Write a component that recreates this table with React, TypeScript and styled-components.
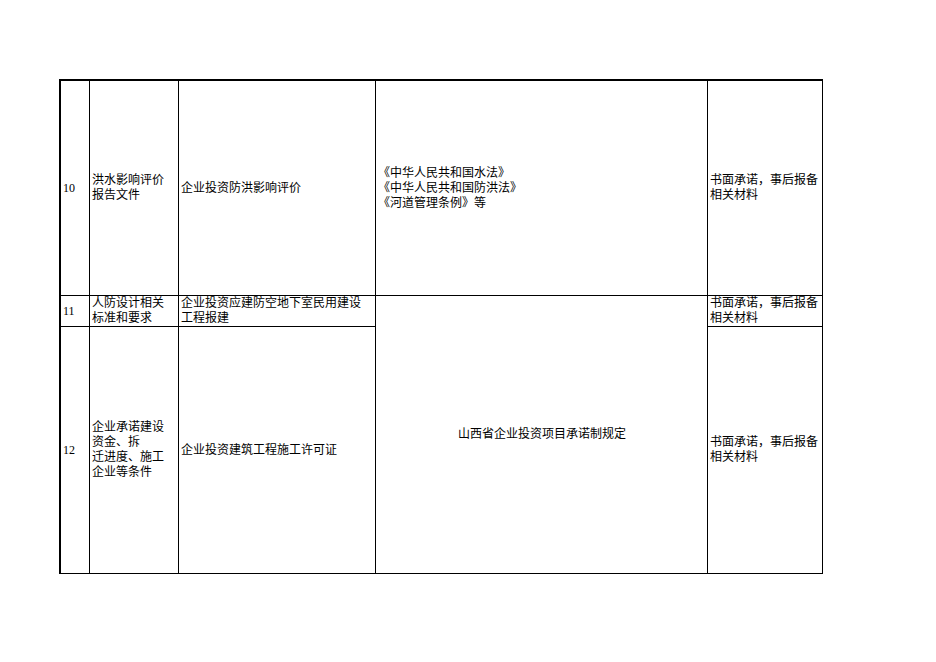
import React from 'react'
import styled, { createGlobalStyle } from 'styled-components'

const GlobalStyle = createGlobalStyle`
  html, body {
    margin: 0;
    padding: 0;
    background: #ffffff;
  }
  body {
    font-family: "Liberation Serif", "Noto Sans CJK SC", serif;
    color: #000000;
  }
`

const Page = styled.div`
  width: 936px;
  height: 662px;
  padding: 79px 0 0 59px;
  box-sizing: border-box;
`

const Sheet = styled.div`
  display: grid;
  grid-template-columns: 29px 89px 197px 332px 115px;
  grid-template-rows: 215px 31px 247px;
  width: max-content;
  border-top: 2px solid #000;
  border-left: 2px solid #000;
`

const Cell = styled.div<{ $center?: boolean; $span?: number }>`
  box-sizing: border-box;
  border-right: 1px solid #000;
  border-bottom: 1px solid #000;
  padding: 0 1px 0 2px;
  display: flex;
  align-items: center;
  justify-content: ${p => (p.$center ? 'center' : 'flex-start')};
  text-align: ${p => (p.$center ? 'center' : 'left')};
  grid-row: ${p => (p.$span ? `span ${p.$span}` : 'auto')};
  font-size: 12px;
  line-height: 15px;
  white-space: nowrap;
  overflow: hidden;
`

const Lines = ({ items }: { items: string[] }) => (
  <div>
    {items.map((t, i) => (
      <div key={i}>{t}</div>
    ))}
  </div>
)

const promise = ['书面承诺，事后报备', '相关材料']

export default function App() {
  return (
    <>
      <GlobalStyle />
      <Page>
        <Sheet>
          <Cell>10</Cell>
          <Cell>
            <Lines items={['洪水影响评价', '报告文件']} />
          </Cell>
          <Cell>企业投资防洪影响评价</Cell>
          <Cell>
            <Lines items={['《中华人民共和国水法》', '《中华人民共和国防洪法》', '《河道管理条例》等']} />
          </Cell>
          <Cell>
            <Lines items={promise} />
          </Cell>

          <Cell>11</Cell>
          <Cell>
            <Lines items={['人防设计相关', '标准和要求']} />
          </Cell>
          <Cell>
            <Lines items={['企业投资应建防空地下室民用建设', '工程报建']} />
          </Cell>
          <Cell $center $span={2}>山西省企业投资项目承诺制规定</Cell>
          <Cell>
            <Lines items={promise} />
          </Cell>

          <Cell>12</Cell>
          <Cell>
            <Lines items={['企业承诺建设', '资金、拆', '迁进度、施工', '企业等条件']} />
          </Cell>
          <Cell>企业投资建筑工程施工许可证</Cell>
          <Cell>
            <Lines items={promise} />
          </Cell>
        </Sheet>
      </Page>
    </>
  )
}
